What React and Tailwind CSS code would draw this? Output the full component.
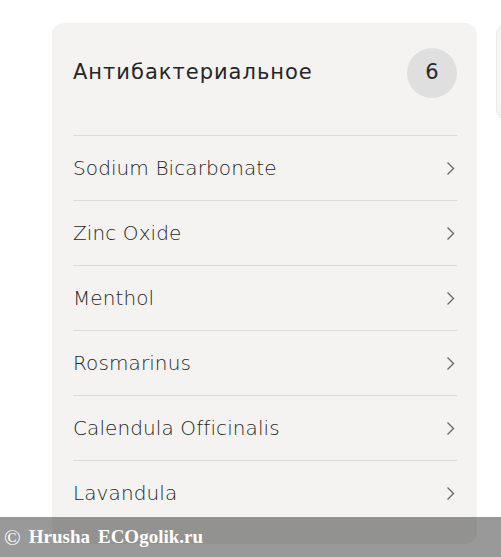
const items = [
  "Sodium Bicarbonate",
  "Zinc Oxide",
  "Menthol",
  "Rosmarinus",
  "Calendula Officinalis",
  "Lavandula",
];

function Chevron() {
  return (
    <svg width="9" height="15" viewBox="0 0 9 15" fill="none" className="shrink-0">
      <path d="M1.5 1.5 L7.5 7.5 L1.5 13.5" stroke="#6b6b6b" strokeWidth="1.4" />
    </svg>
  );
}

export default function App() {
  return (
    <div
      className="relative h-[557px] w-[501px] overflow-hidden bg-white"
      style={{ fontFamily: '"DejaVu Sans", "Open Sans", sans-serif' }}
    >
      <div className="flex items-start gap-[19px] pl-[52px] pt-[23px]">
        <div className="w-[425px] shrink-0 rounded-[12px] bg-[#f4f3f2] pl-[21px] pr-5 pb-[19px]">
          <div className="flex items-center justify-between pt-[25px] pb-[37px]">
            <h2 className="text-[21px] font-medium tracking-[1px] text-[#262626]">Антибактериальное</h2>
            <div className="flex h-[50px] w-[50px] items-center justify-center rounded-full bg-[#e0dfdf] text-[21px] text-[#2b2b2b]">
              6
            </div>
          </div>
          {items.map((name) => (
            <div
              key={name}
              className="flex h-[65px] items-center justify-between border-t border-[#dcdbda] pr-[2px]"
            >
              <span className="text-[20px] font-extralight tracking-[0.1px] text-[#262626]">{name}</span>
              <Chevron />
            </div>
          ))}
        </div>
        <div className="h-[98px] w-[40px] shrink-0 rounded-[12px] border border-[#ecebea] bg-[#f7f6f5]" />
      </div>

      <div
        className="absolute bottom-0 left-0 right-0 flex h-[40px] items-center bg-black/40 pl-[4px] text-[19px] font-bold text-white"
        style={{ fontFamily: '"Liberation Serif", serif' }}
      >
        <span className="text-[22px] font-normal">©</span>
        <span className="ml-[8px]">Hrusha</span>
        <span className="ml-[8px]">ECOgolik.ru</span>
      </div>
    </div>
  );
}
